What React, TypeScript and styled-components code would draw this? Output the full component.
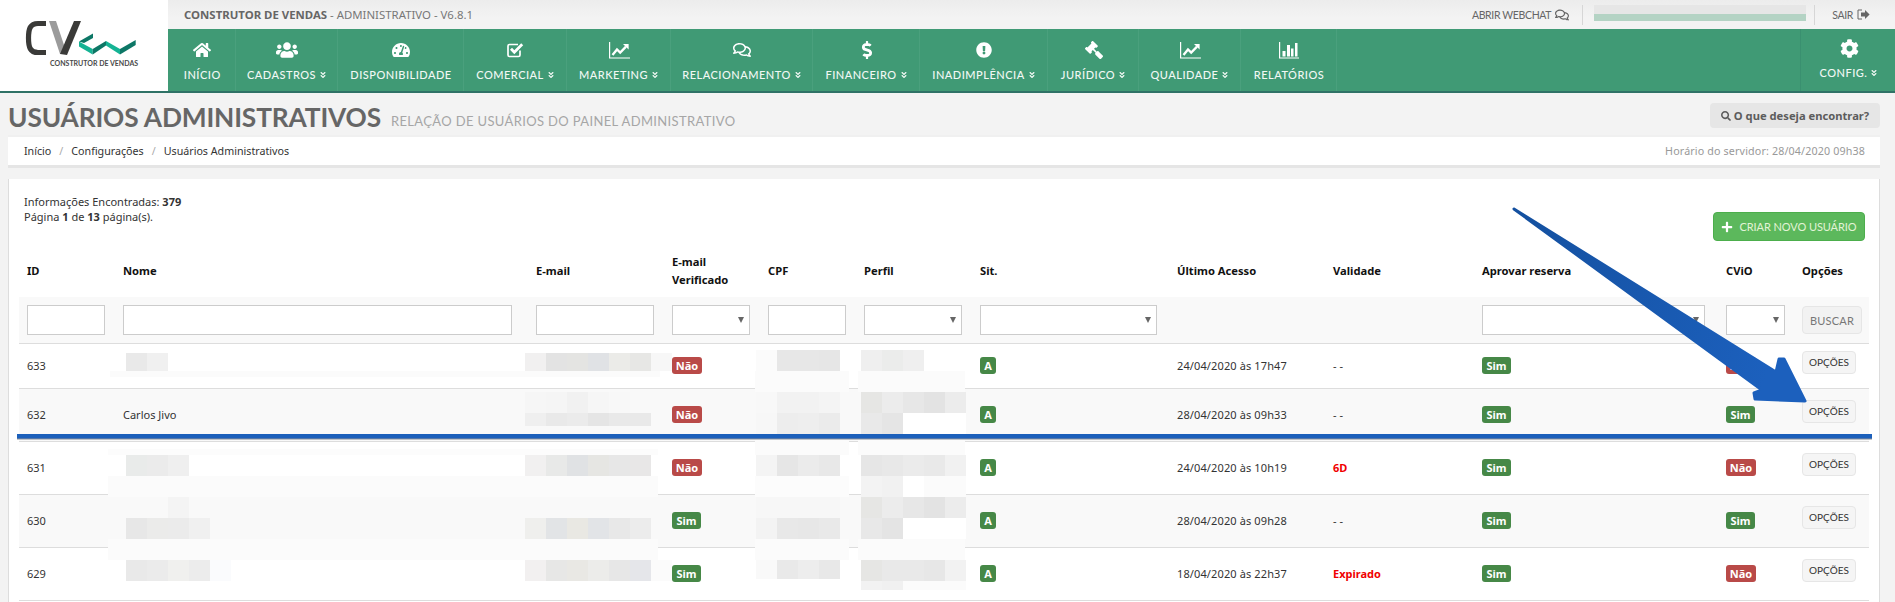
import React from 'react'
import styled, { createGlobalStyle } from 'styled-components'
import {
  FaHome,
  FaUsers,
  FaTachometerAlt,
  FaRegComments,
  FaDollarSign,
  FaExclamationCircle,
  FaGavel,
  FaCog,
  FaAngleDoubleDown,
  FaSearch,
  FaPlus,
} from 'react-icons/fa'

const bodyFont = `"Noto Sans", "DejaVu Sans", sans-serif`
const headFont = `Lato, "Noto Sans", sans-serif`

const GlobalStyle = createGlobalStyle`
  html, body {
    margin: 0;
    background: #f3f3f3;
    font-family: ${bodyFont};
  }
`

const Page = styled.div`
  position: relative;
  width: 1895px;
  height: 602px;
  overflow: hidden;
  background: #f3f3f3;
`

const Header = styled.header`
  display: flex;
  height: 93px;
`

const LogoBox = styled.div`
  width: 168px;
  height: 91px;
  background: #fff;
  border-bottom: 2px solid #2f7266;
  position: relative;
  flex: none;
`

const LogoText = styled.span`
  position: absolute;
  left: 50px;
  top: 59px;
  font: 700 7px/9px ${headFont};
  color: #4a4a4a;
  white-space: nowrap;
`

const HeaderMain = styled.div`
  flex: 1;
  display: flex;
  flex-direction: column;
`

const TopBar = styled.div`
  height: 29px;
  display: flex;
  align-items: center;
  padding-left: 16px;
  background: linear-gradient(#ececec, #f3f3f3 60%);
`

const Brand = styled.div`
  font-size: 11.4px;
  color: #777;
  white-space: nowrap;
  flex: 1;
  b {
    color: #666;
    font-weight: 700;
  }
`

const TopLink = styled.span`
  display: flex;
  align-items: center;
  gap: 4px;
  font: 400 10.5px ${headFont};
  letter-spacing: -0.35px;
  color: #666;
  white-space: nowrap;
  margin-right: ${p => p.$right || 0}px;
  svg {
    font-size: 14px;
  }
`

const TopSep = styled.span`
  width: 1px;
  height: 20px;
  background: #d6d6d6;
  margin: 0 ${p => p.$r}px 0 ${p => p.$l}px;
`

const UserBlur = styled.div`
  width: 212px;
  height: 16px;
  margin-bottom: 3px;
  background: linear-gradient(#e6e6e6 0 9px, #b4d3c4 9px);
`

const NavBar = styled.nav`
  flex: 1;
  display: flex;
  background: #409a75;
  border-bottom: 2px solid #2f7266;
`

const NavItem = styled.a`
  width: ${p => p.$w}px;
  flex: none;
  box-sizing: border-box;
  border-right: 1px solid #4aa07d;
  display: flex;
  flex-direction: column;
  align-items: center;
  padding: 11px 0 0 2px;
  color: #fff;
  font: 500 11px ${headFont};
  letter-spacing: 0.5px;
  white-space: nowrap;
`

const NavIcon = styled.span`
  height: 20px;
  display: flex;
  align-items: center;
  font-size: 18px;
  margin-bottom: 8px;
`

const NavLabel = styled.span`
  display: flex;
  align-items: center;
  gap: 3px;
  color: #f1f8f4;
  line-height: 14px;
  svg {
    font-size: 8px;
  }
`

const NavSpacer = styled.div`
  flex: 1;
  border-right: 1px solid #3a9070;
`

const ConfigItem = styled(NavItem)`
  border-right: 0;
  padding-top: 9px;
  ${NavIcon} {
    margin-bottom: 8px;
    font-size: 19px;
  }
`

const FlippedGavel = styled(FaGavel)`
  transform: scaleX(-1);
`

const TitleRow = styled.div`
  height: 44px;
  display: flex;
  align-items: flex-start;
  padding: 0 15px 0 8px;
`

const Title = styled.h1`
  margin: 9px 0 0;
  font: 700 26.3px/30px ${headFont};
  color: #666;
  letter-spacing: -0.15px;
  white-space: nowrap;
`

const SubTitle = styled.small`
  margin: 20px 0 0 10px;
  font: 400 13px/16px ${headFont};
  letter-spacing: 0.36px;
  color: #a6a6a6;
  white-space: nowrap;
  flex: 1;
`

const SearchButton = styled.button`
  margin-top: 10px;
  width: 170px;
  height: 25px;
  border: 0;
  border-radius: 4px;
  background: #e6e6e6;
  color: #5c5c5c;
  font: 700 11.2px ${bodyFont};
  display: flex;
  align-items: center;
  justify-content: center;
  gap: 3px;
  padding: 0;
  svg {
    font-size: 10px;
  }
`

const Breadcrumb = styled.div`
  margin: 0 15px 0 8px;
  height: 28px;
  background: #fff;
  border-bottom: 3px solid #e5e5e5;
  box-shadow: 0 -2px 0 #f0f0f0;
  display: flex;
  align-items: center;
  padding: 0 15px 0 16px;
  font-size: 10.7px;
  color: #333;
`

const Crumb = styled.span`
  &:not(:last-of-type)::after {
    content: '/';
    color: #aaa;
    margin: 0 8px;
  }
`

const ServerTime = styled.div`
  margin-left: auto;
  color: #999;
  letter-spacing: 0.15px;
`

const Card = styled.section`
  margin: 11px 15px 0 8px;
  height: 423px;
  box-sizing: border-box;
  background: #fff;
  border-left: 1px solid #ddd;
  border-right: 1px solid #ddd;
  padding: 0 10px;
`

const CardTop = styled.div`
  height: 65px;
  display: flex;
  justify-content: space-between;
`

const Info = styled.div`
  padding: 15px 0 0 5px;
  font-size: 11px;
  line-height: 15px;
  color: #333;
`

const CreateButton = styled.button`
  margin: 33px 4px 0 0;
  width: 152px;
  height: 29px;
  box-sizing: border-box;
  border: 1px solid #4cae4c;
  border-radius: 4px;
  background: #5cb85c;
  color: #e2f3d6;
  font: 400 11px ${headFont};
  letter-spacing: -0.08px;
  display: flex;
  align-items: center;
  justify-content: center;
  gap: 6px;
  padding: 0;
  svg {
    color: #fff;
    font-size: 12px;
  }
`

const Table = styled.table`
  width: 1850px;
  table-layout: fixed;
  border-collapse: collapse;
  font-size: 11px;
  color: #333;
`

const Th = styled.th`
  height: 53px;
  padding: 0 0 0 8px;
  box-sizing: border-box;
  text-align: left;
  font-size: 11.2px;
  font-weight: 700;
  line-height: 18px;
  color: #111;
`

const FilterRow = styled.tr`
  background: #f9f9f9;
  height: 46px;
`

const Row = styled.tr`
  height: ${p => p.$h}px;
  background: ${p => (p.$alt ? '#f9f9f9' : '#fff')};
`

const Td = styled.td`
  padding: 0 0 0 8px;
  border-bottom: 1px solid #ddd;
  vertical-align: middle;
  white-space: nowrap;
`

const FilterInput = styled.input`
  display: block;
  width: ${p => p.$w}px;
  height: 30px;
  box-sizing: border-box;
  border: 1px solid #ccc;
  background: #fff;
  padding: 0;
`

const SelectBox = styled.div`
  position: relative;
  width: ${p => p.$w}px;
  &::after {
    content: '';
    position: absolute;
    right: 6px;
    top: 12px;
    border: 3.5px solid transparent;
    border-top: 6px solid #666;
    border-bottom: 0;
  }
`

const FilterSelect = styled.select`
  display: block;
  width: 100%;
  height: 30px;
  box-sizing: border-box;
  border: 1px solid #ccc;
  background: #fff;
  appearance: none;
  border-radius: 0;
`

const Badge = styled.span`
  display: inline-block;
  height: 17px;
  width: ${p => p.$w}px;
  box-sizing: border-box;
  border-radius: 3px;
  background: ${p => (p.$ok ? '#468847' : '#b94a48')};
  color: #fff;
  font-size: 11px;
  font-weight: 700;
  line-height: 17px;
  text-align: center;
  vertical-align: middle;
`

const DateText = styled.span`
  letter-spacing: 0.12px;
`

const Alert = styled.span`
  color: #f00000;
  font-weight: 700;
`

const SearchCellButton = styled.button`
  display: block;
  width: 60px;
  height: 28px;
  margin-top: 1px;
  box-sizing: border-box;
  border: 1px solid #e6e6e6;
  border-radius: 4px;
  background: #f2f2f2;
  color: #777;
  font: 400 11px ${headFont};
  letter-spacing: 0.2px;
  padding: 0;
`

const OptionsButton = styled.button`
  display: block;
  width: 54px;
  height: 23px;
  margin-bottom: 6px;
  box-sizing: border-box;
  border: 1px solid #e6e6e6;
  border-radius: 4px;
  background: #f5f5f5;
  color: #333;
  font: 400 10px ${headFont};
  padding: 0 0 2px;
`

const Patch = styled.i`
  position: absolute;
  display: block;
`

const Overlay = styled.svg`
  position: absolute;
  left: 0;
  top: 0;
  pointer-events: none;
`

const columns = [96, 413, 136, 96, 96, 116, 197, 156, 149, 244, 76, 75]

const rows = [
  { id: '633', name: '', email: false, last: '24/04/2020 às 17h47', valid: '- -', cvio: false, h: 45 },
  { id: '632', name: 'Carlos Jivo', email: false, last: '28/04/2020 às 09h33', valid: '- -', cvio: true, h: 53, alt: true },
  { id: '631', name: '', email: false, last: '24/04/2020 às 10h19', valid: '6D', alert: true, cvio: false, h: 53 },
  { id: '630', name: '', email: true, last: '28/04/2020 às 09h28', valid: '- -', cvio: true, h: 53, alt: true },
  { id: '629', name: '', email: true, last: '18/04/2020 às 22h37', valid: 'Expirado', alert: true, cvio: false, h: 53 },
]

// redacted areas of the screenshot: [left, top, cell width, cell height, ...colours]
const mosaics: [number, number, number, number, ...string[]][] = [
  [110, 371, 550, 6, '#fbfbfb'],
  [126, 353, 21, 18, '#e9e9e9', '#f0f0f0'],
  [525, 353, 21, 18, '#f1f0f0', '#e3e3e3', '#e4e4e2', '#e0e2e5', '#ebebe8', '#e7e7e5', '#f7f7f7'],
  [756, 350, 21, 21, '#fbfbfb', '#e7e7e7', '#e7e7e7', '#e6e6e6'],
  [755, 371, 94, 21, '#fbfbfb'],
  [861, 350, 21, 21, '#efefef', '#ebeceb', '#efefef'],
  [858, 371, 107, 21, '#fbfbfb'],

  [525, 392, 21, 21, '#f6f6f6', '#f5f5f5', '#f1f1f1', '#f6f6f6', '#f8f8f8'],
  [525, 413, 21, 13, '#efefef', '#e9e9e9', '#ebebeb', '#e5e5e5', '#e9e9e9', '#e9e9e9'],
  [756, 392, 21, 21, '#f8f8f8', '#f2f2f2', '#f2f2f2', '#f4f4f4'],
  [756, 413, 21, 21, '#f7f7f7', '#ededed', '#eeeeee', '#ebebeb'],
  [861, 392, 21, 21, '#e6e6e4', '#ececec', '#e7e7e7', '#e3e3e3', '#ececec'],
  [861, 413, 21, 21, '#e9e9e9', '#e5e5e5', '#ffffff', '#ffffff', '#ffffff'],

  [108, 449, 550, 6, '#fcfcfc'],
  [755, 434, 94, 21, '#fbfbfb'],
  [858, 434, 107, 21, '#fbfbfb'],
  [126, 455, 21, 21, '#e9ebea', '#ebebeb', '#efefef'],
  [525, 455, 21, 21, '#f1f0f0', '#e8e9e8', '#e0e2e4', '#e6e6e3', '#e7e7e7', '#e8e7e7'],
  [756, 455, 21, 21, '#f4f4f4', '#e6e6e6', '#ebebeb', '#e8e8e8'],
  [861, 455, 21, 21, '#e6e6e6', '#e8e8e8', '#ebebeb', '#e9e9e9', '#f1f1f1'],
  [108, 476, 550, 21, '#fbfbfb'],
  [755, 476, 94, 21, '#fcfcfc'],
  [861, 476, 21, 21, '#f3f3f3', '#f1f1f1', '#ffffff', '#fbfbfb', '#fbfbfb'],

  [108, 497, 550, 21, '#f9f9f9'],
  [168, 497, 21, 21, '#f4f4f4'],
  [756, 497, 84, 21, '#f7f7f7'],
  [861, 497, 21, 21, '#e6e6e4', '#ececec', '#e7e7e7', '#e3e3e3', '#ececec'],
  [108, 518, 550, 21, '#f9f9f9'],
  [126, 518, 21, 21, '#e7e7e7', '#ebebea', '#ebebeb', '#f0f0f0'],
  [525, 518, 21, 21, '#efefed', '#e2e4e6', '#e9e8e3', '#e2e4e7', '#e8e8e8', '#ececec'],
  [756, 518, 21, 21, '#f3f3f3', '#e8e8e8', '#e7e7e7', '#e9e9e9'],
  [861, 518, 21, 21, '#e8e8e8', '#e4e4e4', '#ffffff', '#ffffff', '#ffffff'],
  [108, 539, 550, 21, '#fbfbfb'],
  [755, 539, 94, 21, '#fbfbfb'],
  [858, 539, 107, 21, '#fbfbfb'],

  [126, 560, 21, 21, '#e9e9e9', '#ebebeb', '#f0f0ee', '#ececec', '#fafbfd'],
  [525, 560, 21, 21, '#f2f0f0', '#e7e7e6', '#e9e8e4', '#ececea', '#e7e7e7', '#e5e6ea', '#fbfbfb'],
  [756, 560, 21, 19, '#f9f9f9', '#e9e9e9', '#ededed', '#e8e8e8'],
  [861, 560, 21, 21, '#e6e6e4', '#e9e9e9', '#e9e9e9', '#e7e7e7', '#f2f2f2'],
  [861, 581, 21, 9, '#f2f2f2', '#f0f0f0', '#fbfbfb', '#fbfbfb', '#fbfbfb'],
]

const Logo = () => (
  <svg width="168" height="60" viewBox="0 0 168 60" style={{ display: 'block' }}>
    <path d="M46 23.5 H38 C30 23.5 28.5 29 28.5 38 C28.5 47 30 52.5 38 52.5 H46" fill="none" stroke="#3a3a38" strokeWidth="5.2" />
    <polygon points="49,21 56,21 67,54 60,54" fill="#9b9b9b" />
    <polygon points="74,21 81,21 67,55 60,54" fill="#3a3a38" />
    <polygon points="79,41.5 93,33.5 93,38 84,43" fill="#0d7766" />
    <polygon points="79,41.5 92.7,49 92.7,54.5 79,46.5" fill="#15b394" />
    <polygon points="92.7,49 106,41 106,45.5 92.7,54.5" fill="#0d7766" />
    <polygon points="106,41 120,49 120,54.5 106,45.5" fill="#15b394" />
    <polygon points="120,49 135.7,40 135.7,45 120,54.5" fill="#0d7766" />
  </svg>
)

const Arrow = () => (
  <Overlay width="1895" height="602" viewBox="0 0 1895 602">
    <defs>
      <linearGradient id="arrowFill" x1="0" y1="0" x2="1" y2="0.2">
        <stop offset="0" stopColor="#14509f" />
        <stop offset="1" stopColor="#1c60bd" />
      </linearGradient>
    </defs>
    <rect x="17" y="438" width="1855" height="1.5" fill="#8a8f98" />
    <rect x="17" y="434" width="1855" height="4.5" fill="#1c60bb" />
    <polygon
      points="1514,209 1776,372 1779,359 1784,359 1805,401 1755,399 1754,393 1762,390"
      fill="url(#arrowFill)"
      stroke="url(#arrowFill)"
      strokeWidth="3"
      strokeLinejoin="round"
    />
  </Overlay>
)

const SignOut = () => (
  <svg width="13" height="11" viewBox="0 0 13 11">
    <path d="M5 1 H1 V10 H5" fill="none" stroke="#666" strokeWidth="1" />
    <path d="M4 3.6 H8 V1 L12.6 5.5 L8 10 V7.4 H4 Z" fill="#666" />
  </svg>
)

const CheckSquare = () => (
  <svg width="17" height="16" viewBox="0 0 17 16">
    <path d="M13 8.5 V13 A1.5 1.5 0 0 1 11.5 14.5 H2.5 A1.5 1.5 0 0 1 1 13 V4 A1.5 1.5 0 0 1 2.5 2.5 H11" fill="none" stroke="#fff" strokeWidth="1.7" />
    <path d="M4 6.8 L7.3 10.2 L15.2 2.2" fill="none" stroke="#fff" strokeWidth="2.8" />
  </svg>
)

const LineChart = () => (
  <svg width="21" height="17" viewBox="0 0 21 17">
    <path d="M0.6 0 V16 H21" fill="none" stroke="#fff" strokeWidth="1.2" />
    <path d="M3.5 13 L8 7.5 L11.2 10.6 L17 4.6" fill="none" stroke="#fff" strokeWidth="2.3" />
    <polygon points="14,2 19.6,2 19.6,7.6" fill="#fff" />
  </svg>
)

const BarChart = () => (
  <svg width="20" height="17" viewBox="0 0 20 17">
    <path d="M0.6 0 V16 H20" fill="none" stroke="#fff" strokeWidth="1.2" />
    <rect x="3.5" y="9" width="3" height="5.5" fill="#fff" />
    <rect x="8" y="3" width="3" height="11.5" fill="#fff" />
    <rect x="12" y="6.5" width="2.5" height="8" fill="#fff" />
    <rect x="16" y="1" width="2.5" height="13.5" fill="#fff" />
  </svg>
)

const navItems = [
  { w: 67.5, label: 'Início', icon: <FaHome /> },
  { w: 102, label: 'Cadastros', icon: <FaUsers size={22} />, more: true },
  { w: 126, label: 'Disponibilidade', icon: <FaTachometerAlt /> },
  { w: 103, label: 'Comercial', icon: <CheckSquare />, more: true },
  { w: 104, label: 'Marketing', icon: <LineChart />, more: true },
  { w: 142, label: 'Relacionamento', icon: <FaRegComments />, more: true },
  { w: 107, label: 'Financeiro', icon: <FaDollarSign />, more: true },
  { w: 128, label: 'Inadimplência', icon: <FaExclamationCircle size={16} />, more: true },
  { w: 91, label: 'Jurídico', icon: <FlippedGavel />, more: true },
  { w: 102, label: 'Qualidade', icon: <LineChart />, more: true },
  { w: 96, label: 'Relatórios', icon: <BarChart /> },
]

const App = () => (
  <Page>
    <GlobalStyle />
    <Header>
      <LogoBox>
        <Logo />
        <LogoText>CONSTRUTOR DE VENDAS</LogoText>
      </LogoBox>
      <HeaderMain>
        <TopBar>
          <Brand>
            <b>CONSTRUTOR DE VENDAS</b> - ADMINISTRATIVO - V6.8.1
          </Brand>
          <TopLink>
            ABRIR WEBCHAT <FaRegComments />
          </TopLink>
          <TopSep $l={13} $r={11} />
          <UserBlur />
          <TopSep $l={8} $r={17} />
          <TopLink $right={25}>
            SAIR <SignOut />
          </TopLink>
        </TopBar>
        <NavBar>
          {navItems.map(item => (
            <NavItem key={item.label} $w={item.w}>
              <NavIcon>{item.icon}</NavIcon>
              <NavLabel>
                {item.label.toUpperCase()}
                {item.more && <FaAngleDoubleDown />}
              </NavLabel>
            </NavItem>
          ))}
          <NavSpacer />
          <ConfigItem $w={94}>
            <NavIcon>
              <FaCog />
            </NavIcon>
            <NavLabel>
              CONFIG. <FaAngleDoubleDown />
            </NavLabel>
          </ConfigItem>
        </NavBar>
      </HeaderMain>
    </Header>

    <TitleRow>
      <Title>USUÁRIOS ADMINISTRATIVOS</Title>
      <SubTitle>RELAÇÃO DE USUÁRIOS DO PAINEL ADMINISTRATIVO</SubTitle>
      <SearchButton>
        <FaSearch /> O que deseja encontrar?
      </SearchButton>
    </TitleRow>

    <Breadcrumb>
      <Crumb>Início</Crumb>
      <Crumb>Configurações</Crumb>
      <Crumb>Usuários Administrativos</Crumb>
      <ServerTime>Horário do servidor: 28/04/2020 09h38</ServerTime>
    </Breadcrumb>

    <Card>
      <CardTop>
        <Info>
          Informações Encontradas: <b>379</b>
          <br />
          Página <b>1</b> de <b>13</b> página(s).
        </Info>
        <CreateButton>
          <FaPlus /> CRIAR NOVO USUÁRIO
        </CreateButton>
      </CardTop>

      <Table>
        <colgroup>
          {columns.map((w, i) => (
            <col key={i} width={w} />
          ))}
        </colgroup>
        <thead>
          <tr>
            <Th>ID</Th>
            <Th>Nome</Th>
            <Th>E-mail</Th>
            <Th>
              E-mail
              <br />
              Verificado
            </Th>
            <Th>CPF</Th>
            <Th>Perfil</Th>
            <Th>Sit.</Th>
            <Th>Último Acesso</Th>
            <Th>Validade</Th>
            <Th>Aprovar reserva</Th>
            <Th>CViO</Th>
            <Th>Opções</Th>
          </tr>
          <FilterRow>
            <Td>
              <FilterInput $w={78} />
            </Td>
            <Td>
              <FilterInput $w={389} />
            </Td>
            <Td>
              <FilterInput $w={118} />
            </Td>
            <Td>
              <SelectBox $w={78}>
                <FilterSelect />
              </SelectBox>
            </Td>
            <Td>
              <FilterInput $w={78} />
            </Td>
            <Td>
              <SelectBox $w={98}>
                <FilterSelect />
              </SelectBox>
            </Td>
            <Td>
              <SelectBox $w={177}>
                <FilterSelect />
              </SelectBox>
            </Td>
            <Td />
            <Td />
            <Td>
              <SelectBox $w={223}>
                <FilterSelect />
              </SelectBox>
            </Td>
            <Td>
              <SelectBox $w={59}>
                <FilterSelect />
              </SelectBox>
            </Td>
            <Td>
              <SearchCellButton>BUSCAR</SearchCellButton>
            </Td>
          </FilterRow>
        </thead>
        <tbody>
          {rows.map(r => (
            <Row key={r.id} $h={r.h} $alt={r.alt}>
              <Td>{r.id}</Td>
              <Td>{r.name}</Td>
              <Td />
              <Td>
                <Badge $ok={r.email} $w={r.email ? 29 : 30}>
                  {r.email ? 'Sim' : 'Não'}
                </Badge>
              </Td>
              <Td />
              <Td />
              <Td>
                <Badge $ok $w={16}>
                  A
                </Badge>
              </Td>
              <Td>
                <DateText>{r.last}</DateText>
              </Td>
              <Td>{r.alert ? <Alert>{r.valid}</Alert> : r.valid}</Td>
              <Td>
                <Badge $ok $w={29}>
                  Sim
                </Badge>
              </Td>
              <Td>
                <Badge $ok={r.cvio} $w={r.cvio ? 29 : 30}>
                  {r.cvio ? 'Sim' : 'Não'}
                </Badge>
              </Td>
              <Td>
                <OptionsButton>OPÇÕES</OptionsButton>
              </Td>
            </Row>
          ))}
        </tbody>
      </Table>
    </Card>

    {mosaics.map(([left, top, width, height, ...colors], i) =>
      colors.map((background, j) => (
        <Patch key={`${i}-${j}`} style={{ left: left + j * width, top, width, height, background }} />
      )),
    )}
    <Arrow />
  </Page>
)

export default App
